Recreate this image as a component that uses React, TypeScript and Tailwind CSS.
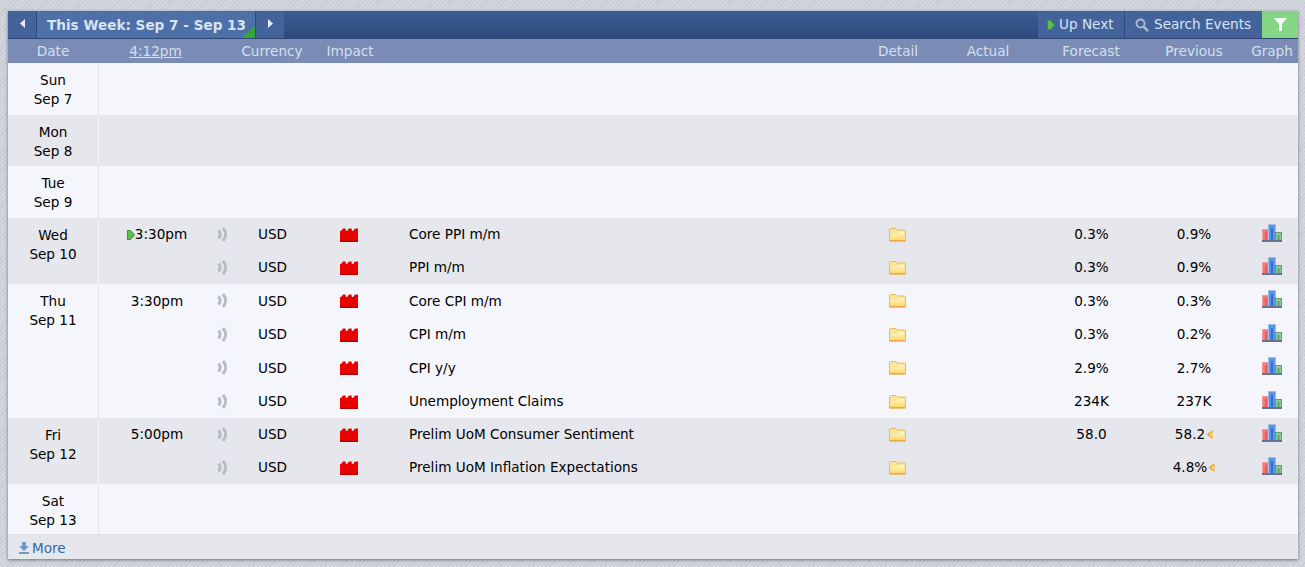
const font = "font-['DejaVu_Sans',Verdana,sans-serif]"

type EventRow = {
  time?: string
  upNext?: boolean
  title: string
  forecast?: string
  previous: string
  revised?: boolean
}

type Day = {
  day: string
  date: string
  height: string
  alt: boolean
  events: EventRow[]
}

const days: Day[] = [
  { day: 'Sun', date: 'Sep 7', height: 'h-[52px]', alt: false, events: [] },
  { day: 'Mon', date: 'Sep 8', height: 'h-[51px]', alt: true, events: [] },
  { day: 'Tue', date: 'Sep 9', height: 'h-[52px]', alt: false, events: [] },
  {
    day: 'Wed',
    date: 'Sep 10',
    height: 'h-[66px]',
    alt: true,
    events: [
      { time: '3:30pm', upNext: true, title: 'Core PPI m/m', forecast: '0.3%', previous: '0.9%' },
      { title: 'PPI m/m', forecast: '0.3%', previous: '0.9%' },
    ],
  },
  {
    day: 'Thu',
    date: 'Sep 11',
    height: 'h-[134px]',
    alt: false,
    events: [
      { time: '3:30pm', title: 'Core CPI m/m', forecast: '0.3%', previous: '0.3%' },
      { title: 'CPI m/m', forecast: '0.3%', previous: '0.2%' },
      { title: 'CPI y/y', forecast: '2.9%', previous: '2.7%' },
      { title: 'Unemployment Claims', forecast: '234K', previous: '237K' },
    ],
  },
  {
    day: 'Fri',
    date: 'Sep 12',
    height: 'h-[66px]',
    alt: true,
    events: [
      { time: '5:00pm', title: 'Prelim UoM Consumer Sentiment', forecast: '58.0', previous: '58.2', revised: true },
      { title: 'Prelim UoM Inflation Expectations', previous: '4.8%', revised: true },
    ],
  },
  { day: 'Sat', date: 'Sep 13', height: 'h-[50px]', alt: false, events: [] },
]

function SoundIcon() {
  return (
    <svg width="11" height="15" viewBox="0 0 11 15" fill="none">
      <path d="M1.5 3.5 C3.6 6 3.6 9 1.5 11.5" stroke="#b4bcc8" strokeWidth="3" />
      <path d="M6 1 C9.4 5 9.4 10 6 14" stroke="#b4bcc8" strokeWidth="3" />
    </svg>
  )
}

function ImpactIcon() {
  return (
    <svg width="18" height="14" viewBox="0 0 18 14">
      <path d="M0 3 L1 3 L3 0.5 L5.5 0.5 L6 3 L7 3 L9 0.5 L11.5 0.5 L12 3 L13 3 L15 0.5 L18 0.5 L18 14 L0 14 Z" fill="#ea0000" />
      <rect x="0" y="12.5" width="18" height="1.5" fill="#b80000" />
    </svg>
  )
}

function FolderIcon() {
  return (
    <svg width="17" height="14" viewBox="0 0 17 14">
      <defs>
        <linearGradient id="folderFront" x1="0" y1="0" x2="0" y2="1">
          <stop offset="0" stopColor="#fff7c8" />
          <stop offset="1" stopColor="#fbd86a" />
        </linearGradient>
      </defs>
      <path d="M0.5 13 L0.5 1.5 Q0.5 0.5 1.5 0.5 L7 0.5 L8.5 2 L15.5 2 Q16.5 2 16.5 3 L16.5 13 Z" fill="#f8e49a" stroke="#e4bc60" />
      <path d="M1.5 6 L8 6 L9.5 4 L15.5 4 L15.5 12 L1.5 12 Z" fill="url(#folderFront)" />
      <rect x="0.5" y="12" width="16" height="1.5" fill="#f2a94e" />
    </svg>
  )
}

function GraphIcon() {
  return (
    <svg width="20" height="18" viewBox="0 0 20 18">
      <rect x="0.5" y="5.5" width="6" height="11" fill="#f27a7a" stroke="#f09a9a" />
      <rect x="3" y="8" width="2" height="8" fill="#ee5a5a" />
      <rect x="6.5" y="0.5" width="7" height="16" fill="#5b95e6" stroke="#9dbbe4" />
      <rect x="9" y="4" width="2" height="12" fill="#2f6fd8" />
      <rect x="13.5" y="8.5" width="6" height="8" fill="#8cc898" stroke="#5f9f6c" />
      <rect x="15.5" y="11" width="2" height="5" fill="#5aa868" />
      <rect x="0" y="16" width="20" height="2" fill="#6a7090" />
    </svg>
  )
}

function PlayMark() {
  return (
    <svg width="8" height="10" viewBox="0 0 8 10" className="inline-block align-[-1px]">
      <path d="M0.5 0.5 L3.5 0.5 L7.5 5 L3.5 9.5 L0.5 9.5 Z" fill="#5cc04a" stroke="#2f9a35" />
    </svg>
  )
}

function RevisedMark() {
  return (
    <svg width="7" height="9" viewBox="0 0 7 9" className="ml-[1px] inline-block align-[0px]">
      <path d="M6.5 0 L6.5 9 L0.5 4.5 Z" fill="#f5a623" />
      <rect x="4" y="3" width="2" height="3" fill="#fcd57e" />
    </svg>
  )
}

function EventLine({ event }: { event: EventRow }) {
  return (
    <div className="flex-1 grid grid-cols-[116px_43px_82px_69px_471px_50px_110px_103px_102px_53px] items-center">
      <div className="text-center whitespace-nowrap">
        {event.upNext && <PlayMark />}
        {event.time}
      </div>
      <div className="flex pl-[2px]">
        <SoundIcon />
      </div>
      <div>USD</div>
      <div className="flex pt-[1px]">
        <ImpactIcon />
      </div>
      <div>{event.title}</div>
      <div className="flex justify-center pt-[1px] pr-[15px]">
        <FolderIcon />
      </div>
      <div />
      <div className="text-center">{event.forecast}</div>
      <div className="text-center whitespace-nowrap">
        {event.previous}
        {event.revised && <RevisedMark />}
      </div>
      <div className="flex justify-center pb-[3px]">
        <GraphIcon />
      </div>
    </div>
  )
}

function DayRow({ day }: { day: Day }) {
  return (
    <div className={`flex ${day.height} ${day.alt ? 'bg-[#e6e7ec]' : 'bg-[#f5f6fb]'}`}>
      <div className={`w-[91px] shrink-0 border-r pt-[8px] text-center leading-[18.5px] ${day.alt ? 'border-[#f5f6fb]' : 'border-[#e6e7ec]'}`}>
        <div>{day.day}</div>
        <div>{day.date}</div>
      </div>
      <div className="flex-1 flex flex-col">
        {day.events.map((event) => (
          <EventLine key={event.title} event={event} />
        ))}
      </div>
    </div>
  )
}

export default function App() {
  return (
    <div className={`${font} h-[567px] w-[1305px] overflow-hidden pt-[11px] px-[8px] text-[13.6px] text-black bg-[#cdd0d9] bg-[repeating-linear-gradient(135deg,#c6cad4_0px,#c6cad4_1px,#d3d6de_1px,#d3d6de_3px)]`}>
      <div className="w-[1290px] shadow-[0_1px_3px_rgba(40,50,70,0.6)]">
        {/* Week navigation */}
        <div className="flex h-[28px] border-b border-[#2b4472] bg-gradient-to-b from-[#3c5c94] to-[#2d4a7c] text-[#d6e4f4]">
          <button className="flex w-[29px] items-center justify-center border-r border-[#2f4a7c] bg-[#44639b] pb-[2px]">
            <svg width="7" height="9" viewBox="0 0 7 9"><path d="M6 0 L6 9 L1 4.5 Z" fill="#e6eef8" /></svg>
          </button>
          <div className="relative w-[219px] border-r border-[#2f4a7c] bg-[#4f6fa8] pl-[10px] font-bold leading-[28px] whitespace-nowrap">
            This Week: Sep 7 - Sep 13
            <div className="absolute bottom-0 right-0 h-0 w-0 border-b-[12px] border-l-[14px] border-b-[#35a53a] border-l-transparent" />
          </div>
          <button className="flex w-[28px] items-center justify-center bg-[#44639b] pb-[2px]">
            <svg width="7" height="9" viewBox="0 0 7 9"><path d="M1 0 L1 9 L6 4.5 Z" fill="#e6eef8" /></svg>
          </button>
          <div className="flex-1" />
          <div className="flex w-[87px] items-center gap-[4px] border-r border-[#2f4a7c] bg-[#44639b] pl-[9px]">
            <PlayMark />
            Up Next
          </div>
          <div className="flex w-[137px] items-center gap-[5px] bg-[#44639b] pl-[10px]">
            <svg width="14" height="14" viewBox="0 0 14 14" fill="none">
              <circle cx="5.5" cy="5.5" r="4" stroke="#aab8d0" strokeWidth="2" />
              <path d="M8.5 8.5 L13 13" stroke="#aab8d0" strokeWidth="2.5" />
            </svg>
            Search Events
          </div>
          <div className="flex w-[36px] items-center justify-center bg-[#85d684]">
            <svg width="13" height="13" viewBox="0 0 13 13"><path d="M0 0 L13 0 L8 6 L8 13 L5 13 L5 6 Z" fill="#f4fbf2" /></svg>
          </div>
        </div>

        {/* Column headers */}
        <div className="grid h-[24px] grid-cols-[90px_115px_118px_38px_501px_56px_24px_76px_27px_76px_27px_76px_14px_52px] items-center bg-[#7a8cb5] pt-[1px] text-[#d3e0ef]">
          <div className="text-center">Date</div>
          <div className="text-center underline">4:12pm</div>
          <div className="text-center">Currency</div>
          <div className="flex justify-center">Impact</div>
          <div />
          <div className="text-center">Detail</div>
          <div />
          <div className="text-center">Actual</div>
          <div />
          <div className="text-center">Forecast</div>
          <div />
          <div className="text-center">Previous</div>
          <div />
          <div className="text-center">Graph</div>
        </div>

        {days.map((day) => (
          <DayRow key={day.date} day={day} />
        ))}

        {/* Footer */}
        <div className="flex h-[25px] items-center border-t border-[#dcdde3] bg-[#e6e7ec] pl-[11px] pt-[2px] text-[#2f6aa8]">
          <svg width="10" height="12" viewBox="0 0 10 12" className="mr-[3px]">
            <path d="M3 0 L7 0 L7 4 L10 4 L5 9 L0 4 L3 4 Z" fill="#6f97c4" />
            <rect x="0" y="10" width="10" height="2" fill="#6f97c4" />
          </svg>
          More
        </div>
      </div>
    </div>
  )
}
